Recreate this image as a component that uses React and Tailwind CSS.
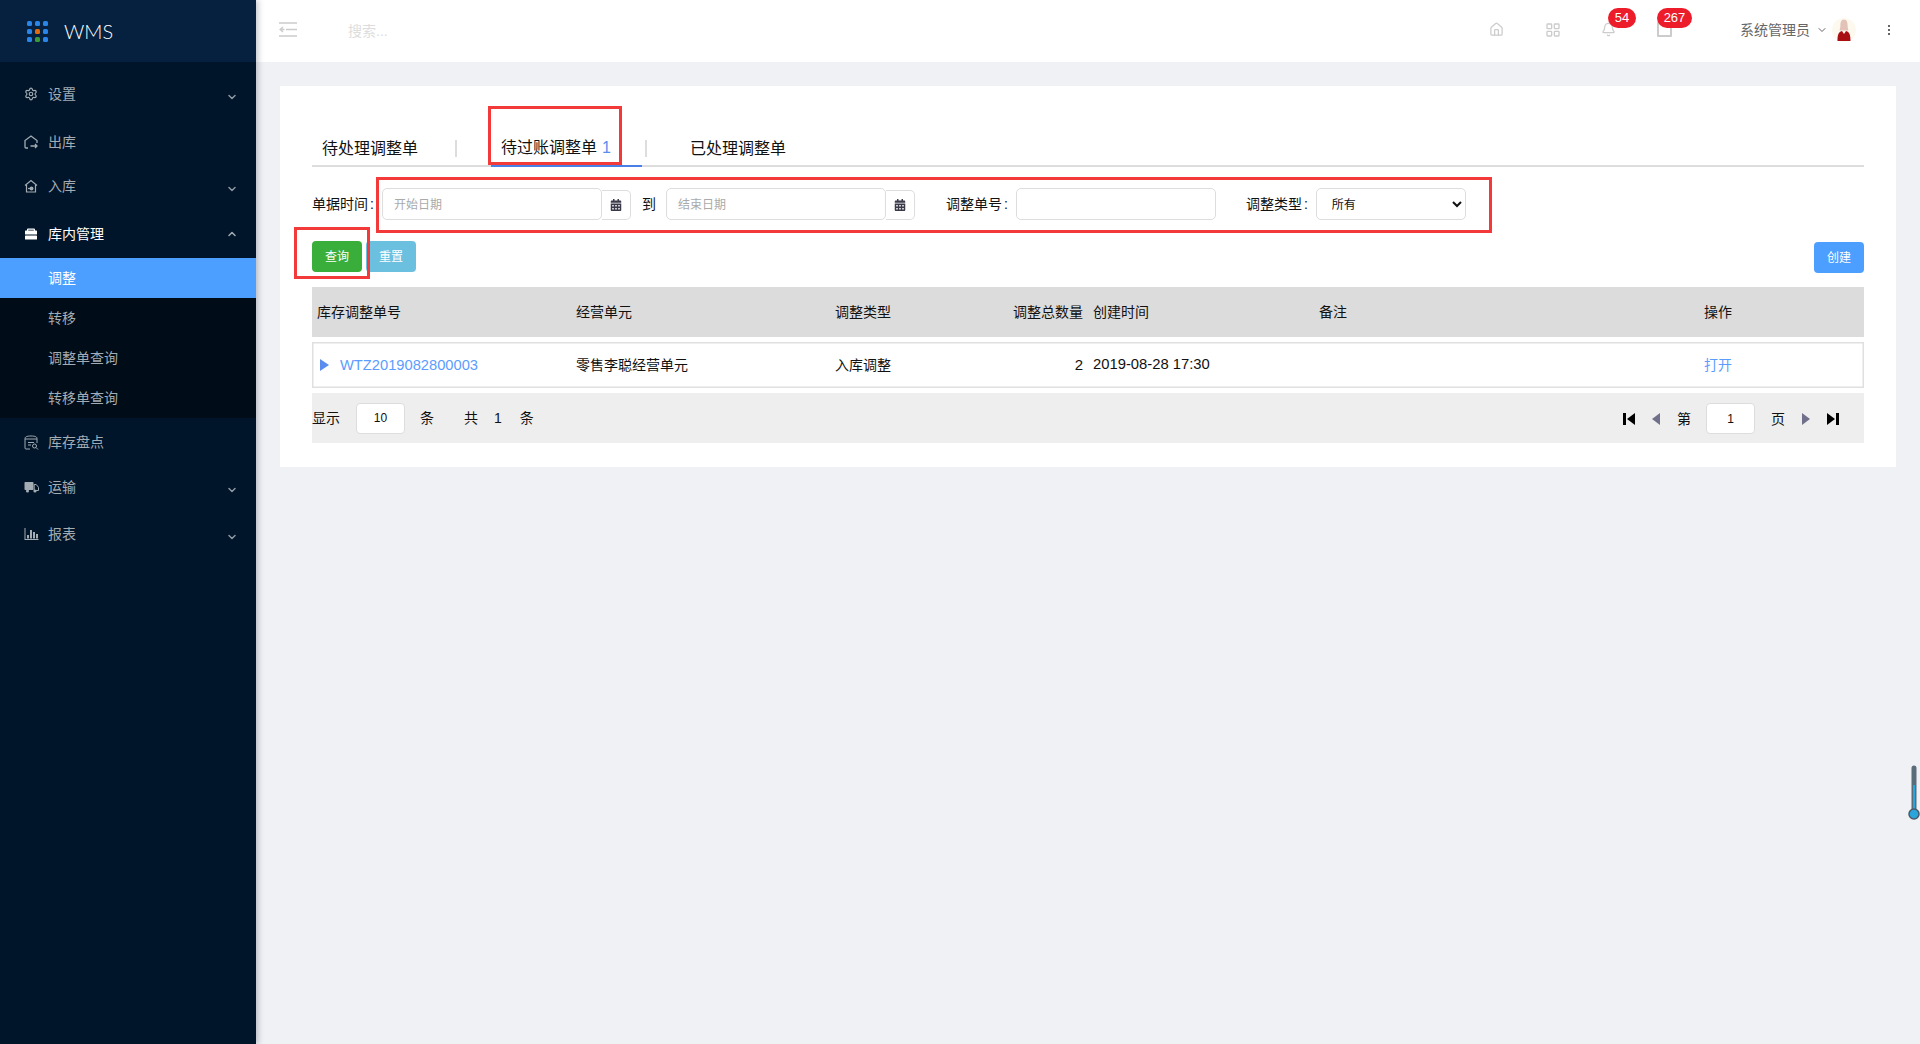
/* Page adjustment list of the WMS */
import { Settings, Home, LayoutGrid, Bell, ChevronDown, ChevronUp } from 'lucide-react'
import { FaCalendarAlt } from 'react-icons/fa'

const OutIcon = () => (
  <svg width="14" height="14" viewBox="0 0 14 14" fill="none" stroke="currentColor" strokeWidth="1.3">
    <path d="M4 13H2a1 1 0 0 1-1-1V5.500L7 1l6 4.500V8" />
    <path d="M6.500 11h6.500M11 9l2 2-2 2" />
  </svg>
)
const InIcon = () => (
  <svg width="14" height="14" viewBox="0 0 14 14" fill="none" stroke="currentColor" strokeWidth="1.2">
    <path d="M1 6.500 7 1.500l6 5M2.500 6v7h9V6" />
    <circle cx="7.500" cy="9.500" r="2" fill="currentColor" stroke="none" />
    <path d="M4 9.500h3" />
  </svg>
)
const StockIcon = () => (
  <svg width="14" height="14" viewBox="0 0 14 14" fill="currentColor">
    <path d="M4 1.500h6a1 1 0 0 1 1 1V4H9.800V2.800H4.200V4H3V2.500a1 1 0 0 1 1-1Z" />
    <rect x="1" y="3.500" width="12" height="4" rx="0.600" />
    <rect x="1" y="8.500" width="12" height="4" rx="0.600" />
  </svg>
)
const CheckIcon = () => (
  <svg width="15" height="15" viewBox="0 0 15 15" fill="none" stroke="currentColor" strokeWidth="1">
    <path d="M6 14H2a1 1 0 0 1-1-1V3.500C1 2 2.500 1 7 1s6 1 6 2.500V8" />
    <path d="M1 4h12M4 7.500h6M4 10h3" />
    <circle cx="10.500" cy="11" r="2" />
    <path d="m12 12.500 2 2" />
  </svg>
)
const TruckIcon = () => (
  <svg width="15" height="14" viewBox="0 0 15 14" fill="currentColor">
    <rect x="0.500" y="2" width="9" height="8" rx="0.800" />
    <path d="M10.200 4.500h2l2.300 2.800V10.500h-4.300Z" fill="none" stroke="currentColor" />
    <circle cx="3.500" cy="11" r="1.600" />
    <circle cx="11" cy="11" r="1.600" />
  </svg>
)
const ChartIcon = () => (
  <svg width="15" height="14" viewBox="0 0 15 14" fill="currentColor">
    <path d="M0.500 1v12h14v-1H1.500V1Z" />
    <rect x="3" y="8" width="2" height="3.500" />
    <rect x="6" y="3" width="2" height="8.500" />
    <rect x="9" y="5" width="2" height="6.500" />
    <rect x="12" y="7" width="2" height="4.500" />
  </svg>
)

const menuTop = [
  { label: '设置', icon: <Settings size={14} />, h: 'h-12', arrow: true },
  { label: '出库', icon: <OutIcon />, h: 'h-11 pt-[3px]', arrow: false },
  { label: '入库', icon: <InIcon />, h: 'h-12', arrow: true },
]
const menuBottom = [
  { label: '库存盘点', icon: <CheckIcon />, h: 'h-12', arrow: false },
  { label: '运输', icon: <TruckIcon />, h: 'h-11 pb-[3px]', arrow: true },
  { label: '报表', icon: <ChartIcon />, h: 'h-12', arrow: true },
]
const subMenu = ['调整', '转移', '调整单查询', '转移单查询']

function MenuItem({ item }) {
  return (
    <div className={`${item.h} flex items-center pl-[24px] pr-[18px] text-[#a3abb3] text-sm`}>
      <span className="w-[24px] flex items-center">{item.icon}</span>
      <span className="flex-1">{item.label}</span>
      {item.arrow && <ChevronDown size={12} strokeWidth={3} className="mt-[6px] text-[#8f98a2]" />}
    </div>
  )
}

function Sidebar() {
  return (
    <aside className="w-[256px] shrink-0 bg-[#001529] shadow-[2px_0_6px_rgba(0,21,41,0.25)] z-10">
      <div className="h-[62px] bg-[#05213f] flex items-center pl-[27px]">
        <div className="grid grid-cols-3 gap-[3px]">
          {['#2a85e8', '#2a85e8', '#2a85e8', '#2a85e8', '#e06a10', '#2a85e8', '#2a85e8', '#3a9a3a', '#2a85e8'].map((c, i) => (
            <span key={i} className="w-[5px] h-[5px] rounded-[1.5px]" style={{ backgroundColor: c }} />
          ))}
        </div>
        <span className="ml-[16px] text-[20px] font-light text-white font-['Lato',sans-serif]">WMS</span>
      </div>
      <nav className="pt-2">
        {menuTop.map((m) => <MenuItem key={m.label} item={m} />)}
        <div className="h-12 flex items-center pl-[24px] pr-[18px] text-white text-sm">
          <span className="w-[24px] flex items-center"><StockIcon /></span>
          <span className="flex-1">库内管理</span>
          <ChevronUp size={12} strokeWidth={3} className="text-[#a3abb3]" />
        </div>
        <div className="bg-[#000c17]">
          {subMenu.map((s, i) => (
            <div key={s} className={`h-10 flex items-center pl-[48px] text-sm ${i === 0 ? 'bg-[#4c9eff] text-white' : 'text-[#a3abb3]'}`}>{s}</div>
          ))}
        </div>
        {menuBottom.map((m) => <MenuItem key={m.label} item={m} />)}
      </nav>
    </aside>
  )
}

function Topbar() {
  return (
    <header className="h-[62px] bg-white flex items-center text-[#ccc]">
      <svg width="18" height="15" viewBox="0 0 18 15" fill="none" stroke="currentColor" strokeWidth="1.500" className="ml-[23px] -translate-y-[2px]">
        <path d="M0 1h18M7 7.500h11M0 14h18" />
        <path d="M4 5 1.200 7.500 4 10M1.500 7.500h4" />
      </svg>
      <span className="ml-[51px] text-sm text-[#ddd]">搜索...</span>
      <div className="ml-auto -mt-[3px] flex items-center">
        <Home size={15} />
        <LayoutGrid size={16} className="ml-[41px]" />
        <div className="relative ml-[40px]">
          <Bell size={15} />
          <span className="absolute -top-[14px] left-[7px] w-[28px] h-[20px] rounded-full bg-[#ed1c2b] text-white text-[13px] flex items-center justify-center">54</span>
        </div>
        <div className="relative ml-[41px]">
          <span className="block w-[15px] h-[15px] border-2 border-[#ccc] rounded-[1px]" />
          <span className="absolute -top-[14px] left-0 w-[35px] h-[20px] rounded-full bg-[#ed1c2b] text-white text-[13px] flex items-center justify-center">267</span>
        </div>
        <span className="ml-[68px] text-sm text-[#666]">系统管理员</span>
        <ChevronDown size={12} className="ml-[6px] text-[#666]" />
        <svg width="24" height="24" viewBox="0 0 24 24" className="ml-[4px]">
          <circle cx="12" cy="12" r="12" fill="#fdf9ef" />
          <path d="M12 1.500c-3 0-3.600 3-3.600 6 0 2.500-.8 4-.8 5h8.800c0-1-.8-2.500-.8-5 0-3-.6-6-3.600-6Z" fill="#e3c2b8" />
          <path d="M5.500 23c0-5 .5-9 4.500-10l2 3 2-3c4 1 4.500 5 4.500 10Z" fill="#a80f12" />
        </svg>
        <span className="ml-[32px] mr-[30px] flex flex-col gap-[2px]">
          <span className="w-[2px] h-[2px] bg-[#666]" />
          <span className="w-[2px] h-[2px] bg-[#666]" />
          <span className="w-[2px] h-[2px] bg-[#666]" />
        </span>
      </div>
    </header>
  )
}

function DateField({ placeholder, className }) {
  return (
    <div className={`flex ${className}`}>
      <input placeholder={placeholder} className="w-[220px] h-8 border border-[#ddd] rounded-[5px] pl-[11px] pt-[2px] text-xs placeholder:text-[#aaa] bg-white" />
      <span className="w-[29px] h-[30px] self-end border border-[#ddd] border-l-0 rounded-r-[5px] flex items-center justify-center text-[#3a3a4a]">
        <FaCalendarAlt size={12} />
      </span>
    </div>
  )
}

const cols = 'grid grid-cols-[259px_259px_170px_83px_231px_385px_165px] [&>*]:pl-[5px]'

function TriIcon({ dir, bar, color }) {
  return (
    <svg width={bar ? 12 : 8} height="14" viewBox={bar ? '0 0 12 14' : '0 0 8 14'} fill={color}>
      {bar && dir === 'left' && <><rect x="0" y="1" width="3" height="12" /><path d="M12 1v12L4 7Z" /></>}
      {bar && dir === 'right' && <><rect x="9" y="1" width="3" height="12" /><path d="M0 1v12l8-6Z" /></>}
      {!bar && dir === 'left' && <path d="M8 1v12L0 7Z" />}
      {!bar && dir === 'right' && <path d="M0 1v12l8-6Z" />}
    </svg>
  )
}

function FilterLabel({ children }) {
  return <span className="w-[70px]">{children}<span className="ml-[2px]">:</span></span>
}

function AdjustCard() {
  return (
    <section className="relative bg-white px-8 pt-[44px] pb-6 text-sm text-[#111]">
      {/* Onglets */}
      <div className="h-[37px] flex border-b-2 border-[#ddd] text-base">
        <div className="w-[146px] pl-[10px] pt-[2px] h-[35px] flex items-center relative">
          待处理调整单
          <span className="absolute right-[1px] top-[10px] h-[17px] w-[2px] bg-[#ddd]" />
        </div>
        <div className="ml-[33px] w-[151px] pl-[10px] pt-[2px] h-[37px] pb-[2px] flex items-center border-b-2 border-[#4a7fe8]">
          待过账调整单<span className="ml-[5px] text-[#5b8def]">1</span>
        </div>
        <span className="ml-[3px] mt-[10px] h-[17px] w-[2px] bg-[#ddd]" />
        <div className="ml-[43px] pt-[2px] h-[35px] flex items-center">已处理调整单</div>
      </div>

      {/* Filtres */}
      <div className="mt-[21px] h-8 flex items-center">
        <FilterLabel>单据时间</FilterLabel>
        <DateField placeholder="开始日期" />
        <span className="ml-[11px]">到</span>
        <DateField placeholder="结束日期" className="ml-[10px]" />
        <span className="ml-[31px]"><FilterLabel>调整单号</FilterLabel></span>
        <input className="ml-[8px] w-[200px] h-8 border border-[#ddd] rounded-[5px] bg-white" />
        <span className="ml-[30px]"><FilterLabel>调整类型</FilterLabel></span>
        <select className="ml-[8px] w-[150px] h-8 border border-[#ddd] rounded-[5px] bg-white text-xs pl-[11px] pt-[2px]">
          <option>所有</option>
        </select>
      </div>

      {/* Boutons */}
      <div className="mt-[21px] h-[31px] flex gap-1 text-xs text-white">
        <button className="w-[50px] h-[31px] rounded-[4px] bg-[#3aae3a]">查询</button>
        <button className="w-[50px] h-[31px] rounded-[4px] bg-[#6bc0e0]">重置</button>
        <button className="ml-auto mt-[1px] w-[50px] h-[31px] rounded-[4px] bg-[#4c9eff]">创建</button>
      </div>

      {/* Tableau */}
      <div className={`${cols} mt-[15px] h-[50px] items-center bg-[#dcdcdc]`}>
        <span>库存调整单号</span>
        <span>经营单元</span>
        <span>调整类型</span>
        <span className="text-right">调整总数量</span>
        <span className="!pl-[10px]">创建时间</span>
        <span>备注</span>
        <span>操作</span>
      </div>
      <div className={`${cols} mt-[5px] h-[46px] items-center shadow-[inset_0_0_0_1.5px_#e0e0e0]`}>
        <span className="flex items-center text-[#5b9dff] text-[14.7px]">
          <svg width="9" height="12" viewBox="0 0 9 12" fill="#5b8def" className="ml-[3px] mr-[11px]"><path d="M0 0v12l9-6Z" /></svg>
          WTZ2019082800003
        </span>
        <span>零售李聪经营单元</span>
        <span>入库调整</span>
        <span className="text-right text-[15px]">2</span>
        <span className="!pl-[10px] text-[14.8px]">2019-08-28 17:30</span>
        <span />
        <span className="text-[#5b9dff]">打开</span>
      </div>

      {/* Pagination */}
      <div className="mt-[5px] h-[50px] flex items-center bg-[#eeeeee]">
        <span>显示</span>
        <span className="ml-[16px] w-[49px] h-[31px] bg-white border border-[#ddd] rounded-[4px] text-xs flex items-center justify-center">10</span>
        <span className="ml-[15px]">条</span>
        <span className="ml-[30px]">共</span>
        <span className="ml-[16px]">1</span>
        <span className="ml-[18px]">条</span>
        <div className="ml-auto mt-[1px] flex items-center mr-[25px]">
          <TriIcon dir="left" bar color="#000" />
          <span className="ml-[17px]"><TriIcon dir="left" color="#70708a" /></span>
          <span className="ml-[17px]">第</span>
          <span className="ml-[15px] w-[49px] h-[31px] bg-white border border-[#ddd] rounded-[4px] text-xs flex items-center justify-center">1</span>
          <span className="ml-[16px]">页</span>
          <span className="ml-[17px]"><TriIcon dir="right" color="#70708a" /></span>
          <span className="ml-[17px]"><TriIcon dir="right" bar color="#000" /></span>
        </div>
      </div>

      {/* Annotations rouges */}
      <div className="absolute left-[208px] top-[20px] w-[134px] h-[59px] border-[3px] border-[#f33a3a]" />
      <div className="absolute left-[96px] top-[91px] w-[1116px] h-[56px] border-[3px] border-[#f33a3a]" />
      <div className="absolute left-[14px] top-[141px] w-[76px] h-[52px] border-[3px] border-[#f33a3a]" />
    </section>
  )
}

export default function App() {
  return (
    <div className="relative flex h-screen overflow-hidden bg-[#f0f1f5] font-['Liberation_Sans','Noto_Sans_CJK_SC',sans-serif]">
      <Sidebar />
      <main className="flex-1 min-w-0">
        <Topbar />
        <div className="pt-6 px-6">
          <AdjustCard />
        </div>
      </main>
      {/* Widget thermometre flottant */}
      <svg width="12" height="56" viewBox="0 0 12 56" className="absolute right-0 top-[765px]">
        <rect x="3.500" y="0.500" width="5" height="48" rx="2.500" fill="#5a6b7a" />
        <rect x="5" y="20" width="2" height="30" fill="#2aa5dc" />
        <circle cx="6" cy="49" r="5" fill="#2aa5dc" stroke="#4a5a68" strokeWidth="1.500" />
      </svg>
    </div>
  )
}
